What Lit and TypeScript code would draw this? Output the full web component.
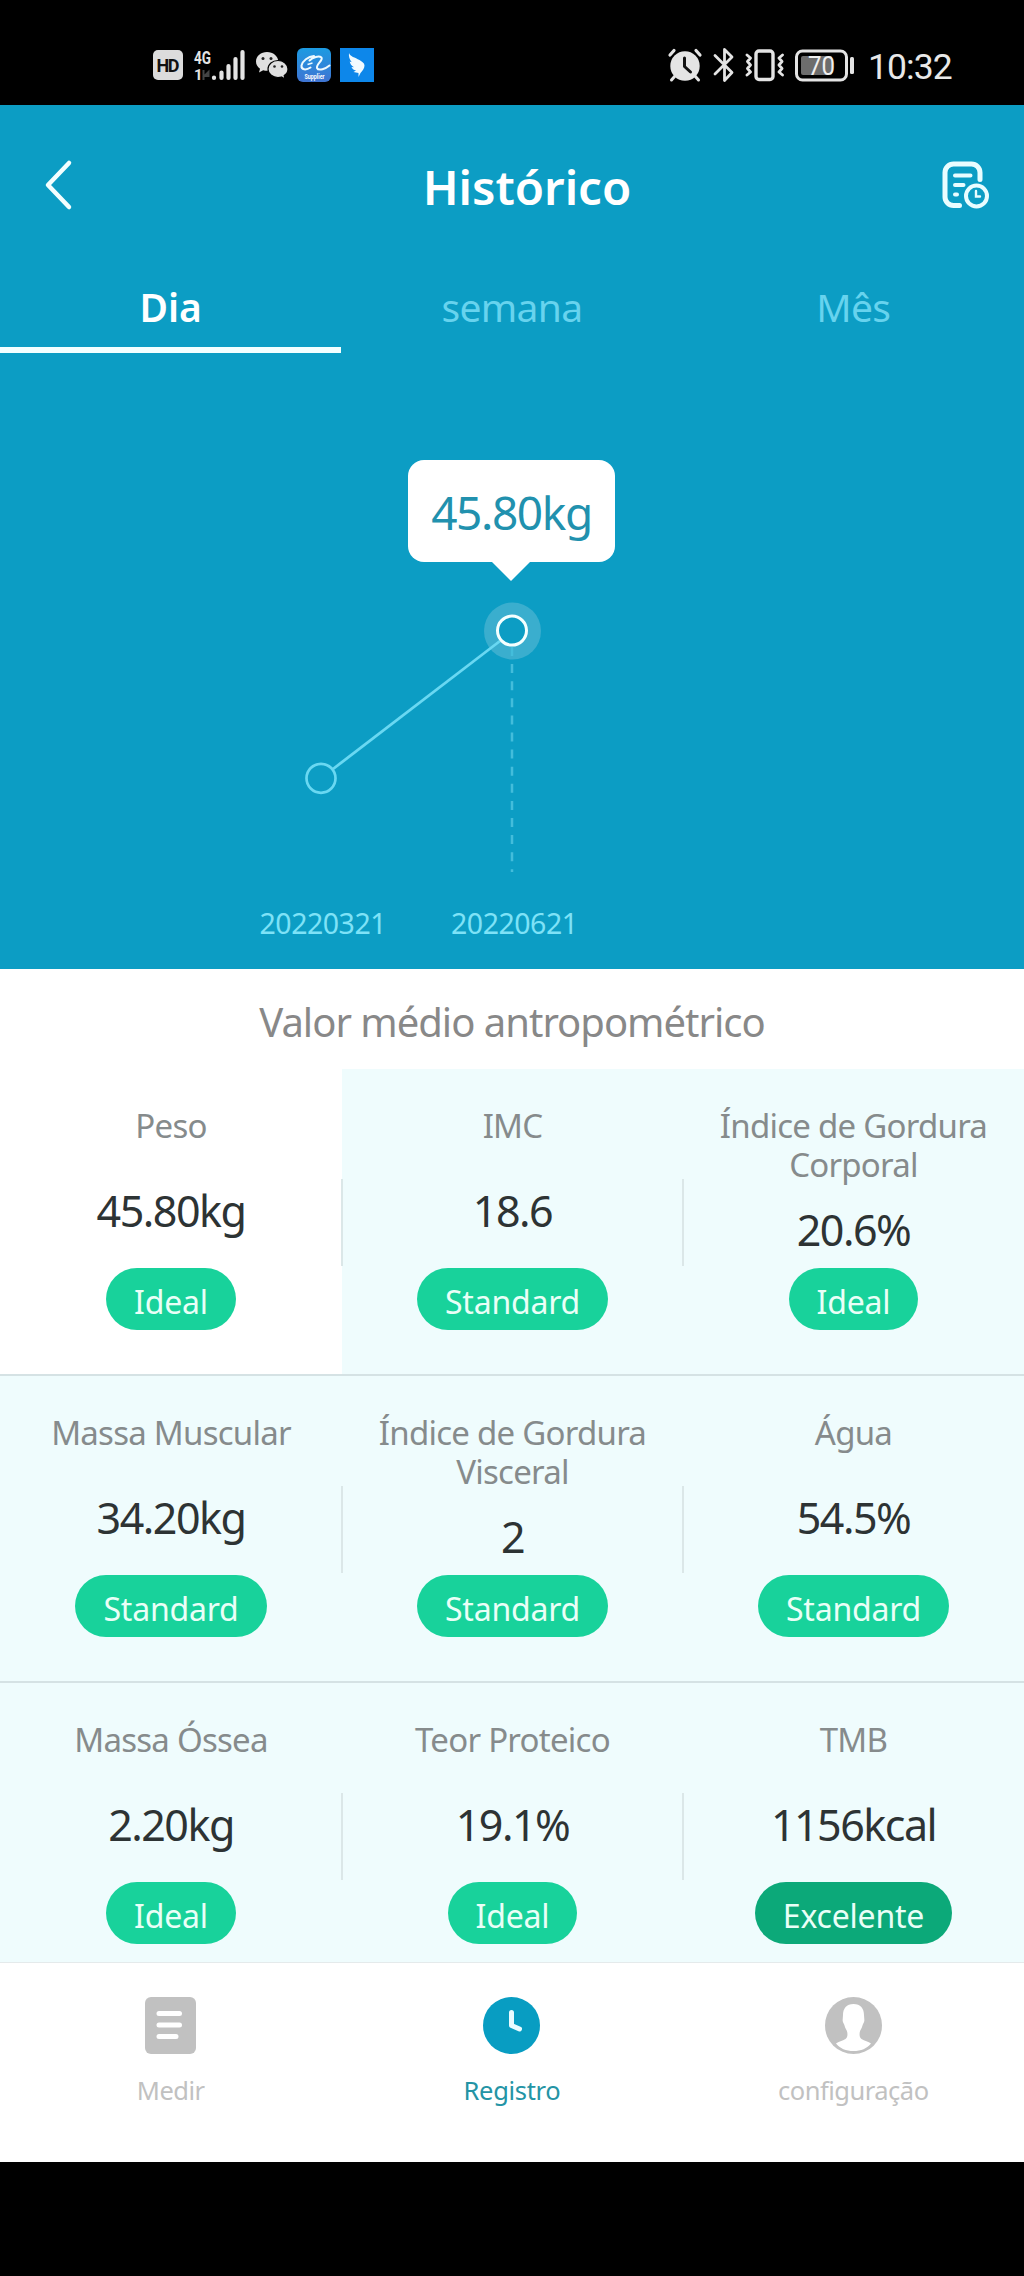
import { LitElement, html, css, nothing } from "lit";
import { customElement, property } from "lit/decorators.js";
import { classMap } from "lit/directives/class-map.js";

interface Metric {
  label: string[];
  value: string;
  status: string;
  active?: boolean;
  strong?: boolean;
}

const METRICS: Metric[] = [
  { label: ["Peso"], value: "45.80kg", status: "Ideal", active: true },
  { label: ["IMC"], value: "18.6", status: "Standard" },
  { label: ["Índice de Gordura", "Corporal"], value: "20.6%", status: "Ideal" },
  { label: ["Massa Muscular"], value: "34.20kg", status: "Standard" },
  { label: ["Índice de Gordura", "Visceral"], value: "2", status: "Standard" },
  { label: ["Água"], value: "54.5%", status: "Standard" },
  { label: ["Massa Óssea"], value: "2.20kg", status: "Ideal" },
  { label: ["Teor Proteico"], value: "19.1%", status: "Ideal" },
  { label: ["TMB"], value: "1156kcal", status: "Excelente", strong: true },
];

@customElement("status-bar")
class StatusBar extends LitElement {
  static styles = css`
    :host {
      display: block;
      height: 105px;
      background: #000;
    }
    .bar {
      display: flex;
      align-items: center;
      height: 34px;
      padding: 48px 72px 0 153px;
    }
    svg {
      display: block;
      flex: none;
      overflow: visible;
    }
    .signal {
      margin-left: 11px;
    }
    .chat {
      margin-left: 10px;
    }
    .app {
      margin-left: 9px;
    }
    .spacer {
      flex: 1;
    }
    .bt {
      margin-left: 11px;
    }
    .vib {
      margin-left: 10px;
    }
    .bat {
      margin-left: 10px;
    }
    .time {
      margin-left: 13px;
      margin-top: 3px;
      width: 84px;
      color: #e8e8e8;
      font: 400 35.5px/34px "Roboto", "Liberation Sans", sans-serif;
      letter-spacing: -0.9px;
      white-space: nowrap;
    }
    text {
      font-family: "Roboto", "Liberation Sans", sans-serif;
    }
  `;

  render() {
    return html`<div class="bar">
      <svg width="30" height="34" viewBox="0 0 30 34">
        <rect y="2" width="30" height="30" rx="5" fill="#dcdcdc" />
        <text x="15" y="23.500" text-anchor="middle" font-size="18" font-weight="700" textLength="23" fill="#111">HD</text>
      </svg>
      <svg class="signal" width="52" height="34" viewBox="0 0 52 34">
        <text x="0" y="16" font-size="18.500" font-weight="700" textLength="17" lengthAdjust="spacingAndGlyphs" fill="#e4e4e4">4G</text>
        <text x="0" y="31.500" font-size="15" font-weight="700" fill="#e4e4e4">1</text>
        <path d="M9.500 22v10M10.500 28l4-4v4z" stroke="#444" stroke-width="2" fill="#444" />
        <path d="M20 29.500v.5M27.500 24.500v5.500M34.500 18v12M41.500 11v19M48.500 4v26" stroke="#e4e4e4" stroke-width="4.200" stroke-linecap="round" />
      </svg>
      <svg class="chat" width="32" height="34" viewBox="0 0 32 34">
        <path d="M11 4C5 4 0 8 0 13.500c0 3 1.500 5.500 4 7.200L3 24.500l4.200-2.300c1.200.4 2.500.6 3.800.6 6 0 11.300-4 11.300-9.300S17 4 11 4z" fill="#e0e0e0" />
        <path d="M22 12.500c-5.500 0-10 3.700-10 8.500s4.500 8.500 10 8.500c1.200 0 2.400-.2 3.500-.5l3.500 2-.8-3.400c2.300-1.500 3.800-3.800 3.800-6.600 0-4.800-4.500-8.500-10-8.500z" fill="#e0e0e0" stroke="#000" stroke-width="1.200" />
        <g fill="#222"><circle cx="7" cy="10.500" r="1.500" /><circle cx="15" cy="10.500" r="1.500" /><circle cx="18.500" cy="18.500" r="1.300" /><circle cx="26" cy="18.500" r="1.300" /></g>
      </svg>
      <svg class="app" width="34" height="34" viewBox="0 0 34 34">
        <defs>
          <linearGradient id="ali" x1="0" y1="0" x2="0" y2="1">
            <stop offset="0" stop-color="#1c9be2" />
            <stop offset="1" stop-color="#3f74d2" />
          </linearGradient>
        </defs>
        <rect width="34" height="34" rx="6" fill="url(#ali)" />
        <path d="M17 8C11 8.500 5.500 13 4.500 17.500C4 22 9 22.500 13.500 19.500M12.500 12.500C16 9 22 7.500 24.500 9.500C26.500 12 19 16.500 20 20C21.500 23.500 29 20.500 32.500 17.500" fill="none" stroke="#eefaff" stroke-width="2" stroke-linecap="round" />
        <path d="M10.500 16.500L15.500 15" stroke="#eefaff" stroke-width="1.500" />
        <text x="17.500" y="31" text-anchor="middle" font-size="6.500" font-weight="700" textLength="20" lengthAdjust="spacingAndGlyphs" fill="#fff">Supplier</text>
      </svg>
      <svg class="app" width="34" height="34" viewBox="0 0 34 34">
        <rect width="34" height="34" fill="#0d87ea" />
        <path d="M9 5c1 3.500 6 4.500 10.500 7 2.500 1.500 5 3 5 5.500 0 3-2 5-4 7.500l-2 4 0-4-5-1 2.500-1.500c-2.500-.5-4-2-4.500-3.500l2.500.2C11.500 18 10 15.500 9.700 13.500l2 .7C9.500 11.500 8.500 8 9 5z" fill="#f2fbff" />
      </svg>
      <span class="spacer"></span>
      <svg width="34" height="34" viewBox="0 0 34 34">
        <g stroke="#e4e4e4" stroke-linecap="round">
          <path d="M2 7l4-4.500M32 7l-4-4.500" stroke-width="3.200" />
          <path d="M7 28l-3.500 4M27 28l3.500 4" stroke-width="3" />
        </g>
        <circle cx="17" cy="18" r="14.700" fill="#e4e4e4" />
        <path d="M16.500 10v8.500l6 5.500" stroke="#111" stroke-width="3" fill="none" stroke-linecap="round" stroke-linejoin="round" />
      </svg>
      <svg class="bt" width="22" height="36" viewBox="0 0 22 36">
        <path d="M2 8.500l17 17-7.500 8V2.500l7.500 7.500L2 27" fill="none" stroke="#e4e4e4" stroke-width="2.800" stroke-linejoin="round" stroke-linecap="round" />
      </svg>
      <svg class="vib" width="40" height="34" viewBox="0 0 40 34">
        <g fill="none" stroke="#e4e4e4" stroke-width="3.400" stroke-linejoin="round" stroke-linecap="round">
          <rect x="11" y="3" width="17" height="28.500" rx="3" />
          <path d="M2 7l3.500 3-3 3.500 3 3.500-3 3.500 3 3.500L2 27M37.500 7L34 10l3 3.500-3 3.500 3 3.500-3 3.500 3.500 3" stroke-width="2.800" />
        </g>
      </svg>
      <svg class="bat" width="60" height="34" viewBox="0 0 60 34">
        <rect x="1.500" y="3" width="50" height="29" rx="6" fill="none" stroke="#e4e4e4" stroke-width="3" />
        <rect x="6" y="8" width="31" height="19" rx="2" fill="#6d6d6d" />
        <rect x="55" y="9" width="4" height="17" rx="1.500" fill="#e4e4e4" />
        <text x="26.500" y="27" text-anchor="middle" font-size="26" textLength="27" lengthAdjust="spacingAndGlyphs" fill="#f0f0f0">70</text>
      </svg>
      <span class="time">10:32</span>
    </div>`;
  }
}

@customElement("weight-chart")
class WeightChart extends LitElement {
  static styles = css`
    :host {
      display: block;
      position: relative;
      height: 617px;
    }
    svg {
      display: block;
    }
    .tip {
      position: absolute;
      left: 408px;
      top: 108px;
      width: 207px;
      height: 102px;
      box-sizing: border-box;
      border-radius: 16px;
      background: #fff;
      color: #2191ae;
      font-size: 46px;
      line-height: 105px;
      letter-spacing: -1.4px;
      text-align: center;
    }
    .tip::after {
      content: "";
      position: absolute;
      left: 83px;
      top: 101px;
      border: 20px solid transparent;
      border-top-color: #fff;
      border-bottom: 0;
    }
    .date {
      font-size: 28.5px;
      fill: #7ee2f7;
    }
  `;

  render() {
    return html`
      <svg width="1024" height="617" viewBox="0 352 1024 617">
        <circle cx="512.500" cy="631" r="28.500" fill="#3aaece" />
        <path d="M512 647V872" stroke="#43bddb" stroke-width="2.500" stroke-dasharray="9 8.100" />
        <path d="M333 769L500 641" stroke="#69d8f2" stroke-width="2.800" />
        <circle cx="321" cy="778.300" r="14.500" fill="none" stroke="#69d8f2" stroke-width="2.700" />
        <circle cx="512" cy="630.600" r="14.500" fill="#0c9dc4" stroke="#f4ffff" stroke-width="3" />
        <text class="date" x="323" y="934" text-anchor="middle" textLength="127">20220321</text>
        <text class="date" x="514.500" y="934" text-anchor="middle" textLength="127">20220621</text>
      </svg>
      <div class="tip">45.80kg</div>
    `;
  }
}

@customElement("metric-cell")
class MetricCell extends LitElement {
  @property({ attribute: false }) metric!: Metric;
  @property({ type: Boolean }) divider = false;

  static styles = css`
    :host {
      display: block;
      min-width: 0;
    }
    .cell {
      display: flex;
      height: 307px;
      box-sizing: border-box;
      border-bottom: 2px solid #d5e2e4;
      background: #effcfd;
    }
    .active {
      background: #fff;
    }
    .content {
      flex: 1;
      display: flex;
      flex-direction: column;
      align-items: center;
      padding: 37px 0 44px;
    }
    .label {
      color: #868b8c;
      font-size: 33px;
      line-height: 39px;
      letter-spacing: -0.75px;
      text-align: center;
      white-space: nowrap;
    }
    .label span {
      display: block;
    }
    .value {
      flex: 1;
      display: flex;
      align-items: center;
      padding-top: 8px;
      color: #2d3334;
      font-size: 43px;
      line-height: 50px;
      letter-spacing: -1.5px;
    }
    .pill {
      height: 62px;
      box-sizing: border-box;
      padding: 3px 28px 0;
      border-radius: 31px;
      background: #18d29b;
      color: #e9fff7;
      font-size: 32px;
      line-height: 62px;
      letter-spacing: -0.2px;
    }
    .strong {
      background: #0ca979;
    }
    .divider {
      width: 2px;
      height: 87px;
      margin: 110px -1px 0 -1px;
      background: #dbe7e8;
      position: relative;
    }
  `;

  render() {
    const m = this.metric;
    return html`<div class=${classMap({ cell: true, active: !!m.active })}>
      <div class="content">
        <div class="label">${m.label.map((line) => html`<span>${line}</span>`)}</div>
        <div class="value">${m.value}</div>
        <div class=${classMap({ pill: true, strong: !!m.strong })}>${m.status}</div>
      </div>
      ${this.divider ? html`<div class="divider"></div>` : nothing}
    </div>`;
  }
}

@customElement("app-root")
class AppRoot extends LitElement {
  static styles = css`
    :host {
      display: flex;
      flex-direction: column;
      width: 1024px;
      height: 2276px;
      background: #000;
      font-family: "Noto Sans", "Open Sans", sans-serif;
      overflow: hidden;
    }
    .hero {
      height: 864px;
      background: #0c9dc4;
      color: #fff;
    }
    .header {
      display: flex;
      align-items: center;
      justify-content: space-between;
      height: 160px;
      padding: 0 34px 0 43px;
    }
    .header h1 {
      margin: 4px 0 0 37px;
      font-size: 47.5px;
      line-height: 60px;
      font-weight: 600;
      letter-spacing: 0;
    }
    .tabs {
      display: grid;
      grid-template-columns: repeat(3, 1fr);
      height: 87px;
    }
    .tab {
      box-sizing: border-box;
      padding-top: 1px;
      border-bottom: 6px solid transparent;
      color: #67d3ee;
      font-size: 39px;
      line-height: 81px;
      letter-spacing: -0.7px;
      text-align: center;
    }
    .selected {
      border-color: #f3ffff;
      color: #fff;
      font-weight: 600;
      letter-spacing: 0;
    }
    .title {
      height: 100px;
      box-sizing: border-box;
      padding-top: 3px;
      background: #fff;
      color: #888;
      font-size: 40px;
      line-height: 100px;
      letter-spacing: -1px;
      text-align: center;
    }
    .metrics {
      display: grid;
      grid-template-columns: 342px 341px 341px;
      height: 893px;
      overflow: hidden;
    }
    .nav {
      display: grid;
      grid-template-columns: repeat(3, 1fr);
      height: 200px;
      box-sizing: border-box;
      border-top: 1px solid #e4eaeb;
      background: #fff;
    }
    .item {
      display: flex;
      flex-direction: column;
      align-items: center;
      gap: 18px;
      padding-top: 34px;
      color: #c1c1c1;
      font-size: 25.5px;
      line-height: 36px;
      letter-spacing: -0.5px;
    }
    .current {
      color: #0c9dc4;
    }
    .current span {
      color: #2494a5;
      letter-spacing: -0.3px;
    }
    svg {
      display: block;
    }
  `;

  render() {
    return html`
      <status-bar></status-bar>
      <section class="hero">
        <div class="header">
          <svg width="32" height="52" viewBox="0 0 32 52">
            <path d="M26 4L5 26l21 22" fill="none" stroke="#f3ffff" stroke-width="4.500" stroke-linecap="round" stroke-linejoin="round" />
          </svg>
          <h1>Histórico</h1>
          <svg width="48" height="48" viewBox="0 0 48 48">
            <g fill="none" stroke="#e9fdff" stroke-linecap="round">
              <path d="M38 18.500V11.500A8.500 8.500 0 0 0 29.500 3H11.500A8.500 8.500 0 0 0 3 11.500V36A8.500 8.500 0 0 0 11.500 44.500H17.500" stroke-width="5" />
              <path d="M13 14.500H28.500M13 24H21.500M13 33.500H15" stroke-width="4" />
              <circle cx="34.500" cy="35" r="10.500" stroke-width="4" />
              <path d="M34 30V35.500H38" stroke-width="2.400" />
            </g>
          </svg>
        </div>
        <div class="tabs">
          <div class="tab selected">Dia</div>
          <div class="tab">semana</div>
          <div class="tab">Mês</div>
        </div>
        <weight-chart></weight-chart>
      </section>
      <div class="title">Valor médio antropométrico</div>
      <section class="metrics">
        ${METRICS.map((m, i) => html`<metric-cell .metric=${m} ?divider=${i % 3 < 2}></metric-cell>`)}
      </section>
      <nav class="nav">
        <div class="item">
          <svg width="51" height="57" viewBox="0 0 51 57">
            <rect width="51" height="57" rx="6" fill="#c1c1c1" />
            <path d="M14 16.500H34.500M14 28H34.500M14 39.500H31" stroke="#fff" stroke-width="5" stroke-linecap="round" />
          </svg>
          <span>Medir</span>
        </div>
        <div class="item current">
          <svg width="57" height="57" viewBox="0 0 57 57">
            <circle cx="28.500" cy="28.500" r="28.500" fill="#089dc2" />
            <path d="M28.500 15.500V28.500L36.500 32" fill="none" stroke="#e9fbff" stroke-width="5" stroke-linecap="round" stroke-linejoin="round" />
          </svg>
          <span>Registro</span>
        </div>
        <div class="item">
          <svg width="57" height="57" viewBox="0 0 57 57">
            <circle cx="28.500" cy="28.500" r="28.500" fill="#c1c1c1" />
            <path d="M28.500 7C21.500 7 18 11.500 18 18c0 2-.5 4-.3 6 .3 2 1.300 2.500 1.800 4.500.6 3 2.500 4.500 2.800 7 .3 3 .2 5-1.800 6.500-3 2-7 2.500-9.500 4.500 4 5 10 7.500 17.500 7.500s13.500-2.500 17.500-7.500c-2.500-2-6.500-2.500-9.500-4.500-2-1.500-2.100-3.500-1.800-6.500.3-2.500 2.200-4 2.800-7 .5-2 1.500-2.500 1.800-4.500.2-2-.3-4-.3-6C39 11.500 35.500 7 28.500 7z" fill="#fff" />
          </svg>
          <span>configuração</span>
        </div>
      </nav>
    `;
  }
}
